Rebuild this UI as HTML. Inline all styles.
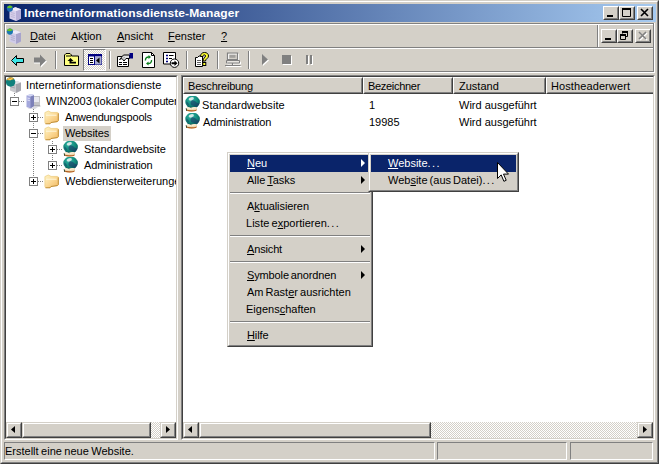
<!DOCTYPE html>
<html lang="de">
<head>
<meta charset="utf-8">
<title>Internetinformationsdienste-Manager</title>
<style>
*{box-sizing:border-box;margin:0;padding:0}
html,body{width:659px;height:464px;overflow:hidden;background:#d4d0c8}
body{font-family:"Liberation Sans",sans-serif;font-size:11px;color:#000;position:relative;line-height:13px}
.abs{position:absolute}
u{text-decoration:underline;text-underline-offset:1px}
#win{position:absolute;left:0;top:0;width:659px;height:464px;background:#d4d0c8;
 border:1px solid;border-color:#d4d0c8 #404040 #404040 #d4d0c8}
#win:before{content:"";position:absolute;left:0;top:0;right:0;bottom:0;border:1px solid;border-color:#fff #808080 #808080 #fff}
#title{left:4px;top:4px;width:652px;height:18px;background:linear-gradient(90deg,#0a246a 0%,#a6caf0 100%)}
#title .txt{position:absolute;left:20px;top:2px;color:#fff;font-weight:bold;font-size:12px;letter-spacing:0.09px;line-height:14px;white-space:nowrap;transform:scaleY(.93);transform-origin:0 100%}
.btn{position:absolute;width:16px;height:14px;background:#d4d0c8;border:1px solid;border-color:#fff #404040 #404040 #fff}
.btn:before{content:"";position:absolute;left:0;top:0;right:0;bottom:0;border:1px solid;border-color:#d4d0c8 #808080 #808080 #d4d0c8}
.btn svg{position:absolute;left:0;top:0}
.t{position:absolute;white-space:nowrap}
.hl{position:absolute;height:1px}
.vl{position:absolute;width:1px}

.dv{position:absolute;width:1px;background-image:repeating-linear-gradient(180deg,#808080 0 1px,transparent 1px 2px)}
.dh{position:absolute;height:1px;background-image:repeating-linear-gradient(90deg,#808080 0 1px,transparent 1px 2px)}
.eb{position:absolute;width:9px;height:9px;border:1px solid #808080;background:#fff}
.eb:before{content:"";position:absolute;left:1px;top:3px;width:5px;height:1px;background:#000}
.eb.plus:after{content:"";position:absolute;left:3px;top:1px;width:1px;height:5px;background:#000}
.sbtrack{background-color:#fff;background-image:conic-gradient(#d4d0c8 25%,#fff 0 50%,#d4d0c8 0 75%,#fff 0);background-size:2px 2px}
.sbb{position:absolute;width:16px;height:16px;background:#d4d0c8;border:1px solid;border-color:#d4d0c8 #404040 #404040 #d4d0c8}
.sbb:before{content:"";position:absolute;left:0;top:0;right:0;bottom:0;border:1px solid;border-color:#fff #808080 #808080 #fff}
.sbb svg{position:absolute;left:0;top:0}
.hd{position:absolute;top:0;height:17px;background:#d4d0c8;border:1px solid;border-color:#fff #404040 #404040 #fff}
.hd:before{content:"";position:absolute;left:0;top:0;right:0;bottom:0;border:1px solid;border-color:#d4d0c8 #808080 #808080 #d4d0c8}
.hd span{position:absolute;left:5px;top:2px;white-space:nowrap}
.sp{position:absolute;top:442px;height:18px;border:1px solid;border-color:#808080 #fff #fff #808080}
.menu{position:absolute;background:#d4d0c8;border:1px solid;border-color:#d4d0c8 #404040 #404040 #d4d0c8}
.menu:before{content:"";position:absolute;left:0;top:0;right:0;bottom:0;border:1px solid;border-color:#fff #808080 #808080 #fff}
.mi{position:absolute;left:2px;right:2px;height:17px}
.mi span{position:absolute;left:17px;top:2px;white-space:nowrap;word-spacing:-1px}
.mi.sel{background:#0a246a;color:#fff}
.ms{position:absolute;left:2px;right:2px;height:2px;margin-top:3px;border-top:1px solid #808080;border-bottom:1px solid #fff}
.arr{position:absolute;right:5px;top:4px;width:0;height:0;border:solid transparent;border-width:4px 0 4px 4.500px;border-left-color:#000}
.arr.w{border-left-color:#fff}
.tsep{position:absolute;top:51px;width:2px;height:18px;border-left:1px solid #808080;border-right:1px solid #fff}
.mi b{font-weight:normal;letter-spacing:1.4px}
</style>
</head>
<body>
<div id="win"></div>

<!-- title bar -->
<div id="title" class="abs"><span class="txt">Internetinformationsdienste-Manager</span></div>
<div class="btn" style="left:603px;top:6px"><svg width="14" height="12"><rect x="3" y="8" width="6" height="2" fill="#000"/></svg></div>
<div class="btn" style="left:619px;top:6px"><svg width="14" height="12"><path d="M2.5 1.5h8v8h-8z" fill="none" stroke="#000" stroke-width="1"/><rect x="2" y="1" width="9" height="2" fill="#000"/></svg></div>
<div class="btn" style="left:637px;top:6px"><svg width="14" height="12"><path d="M3 2l7 7M10 2l-7 7" stroke="#000" stroke-width="1.6" fill="none"/></svg></div>

<svg class="abs" style="left:6px;top:5px" width="16" height="16" viewBox="0 0 16 16"><path d="M3.500 4.200l6-2 5.500 2v9.300l-5 2.500-6.500-2.500z" fill="#d8d0ec"/><path d="M10 16l5-2.500V4.200L10 6z" fill="#b8b0d8"/><path d="M3.500 4.200L10 6l5-1.800-5.500-2z" fill="#f0ecfa"/><path d="M4.800 7.500l4 1M4.800 9.500l4 1M4.800 11.500l4 1" stroke="#b8b0d0" stroke-width=".8"/><circle cx="3.900" cy="3.600" r="3.100" fill="#1c6ab0"/><path d="M1 2.600a3.100 3.100 0 0 1 5.600 -.6c-1.500 1.300-3.800 1.600-5.600 .6z" fill="#66c41e"/></svg><svg class="abs" style="left:6px;top:28px" width="16" height="16" viewBox="0 0 16 16"><path d="M3.500 4.200l6-2 5.500 2v9.300l-5 2.500-6.500-2.500z" fill="#d0cce8"/><path d="M10 16l5-2.500V4.200L10 6z" fill="#a8a4cc"/><path d="M3.500 4.200L10 6l5-1.800-5.500-2z" fill="#eceaf8"/><path d="M4.800 7.500l4 1M4.800 9.500l4 1M4.800 11.500l4 1" stroke="#a8a4c8" stroke-width=".8"/><circle cx="3.900" cy="3.600" r="3.100" fill="#1c78b0"/><path d="M1 2.600a3.100 3.100 0 0 1 5.600 -.6c-1.500 1.300-3.800 1.600-5.600 .6z" fill="#66c41e"/></svg>
<!-- menu bar -->
<div class="hl" style="left:4px;top:23px;width:650px;background:#808080"></div>
<div class="hl" style="left:5px;top:24px;width:648px;background:#fff"></div>
<div class="hl" style="left:6px;top:47px;width:647px;background:#808080"></div>
<div class="hl" style="left:5px;top:48px;width:648px;background:#fff"></div>
<div class="vl" style="left:4px;top:23px;height:49px;background:#808080"></div>
<div class="vl" style="left:5px;top:24px;height:48px;background:#fff"></div>
<div class="vl" style="left:653px;top:24px;height:48px;background:#808080"></div>
<div class="vl" style="left:654px;top:23px;height:50px;background:#fff"></div>
<div class="vl" style="left:597px;top:25px;height:22px;background:#808080"></div>
<div class="vl" style="left:598px;top:25px;height:22px;background:#fff"></div>
<span class="t" style="left:30px;top:30px"><u>D</u>atei</span>
<span class="t" style="left:71px;top:30px">Ak<u>t</u>ion</span>
<span class="t" style="left:117px;top:30px"><u>A</u>nsicht</span>
<span class="t" style="left:168px;top:30px"><u>F</u>enster</span>
<span class="t" style="left:221px;top:30px"><u>?</u></span>
<div class="btn" style="left:601px;top:29px"><svg width="14" height="12"><rect x="3" y="8" width="6" height="2" fill="#000"/></svg></div>
<div class="btn" style="left:617px;top:29px"><svg width="14" height="12"><path d="M4.5 3.5v-2h5v5h-1.500" fill="none" stroke="#000" stroke-width="1"/><rect x="4" y="1" width="6" height="2" fill="#000"/><path d="M2.500 4.500h5v5h-5z" fill="none" stroke="#000" stroke-width="1"/><rect x="2" y="4" width="6" height="2" fill="#000"/></svg></div>
<div class="btn" style="left:635px;top:29px"><svg width="14" height="12"><path d="M4 3l7 7M11 3l-7 7" stroke="#fff" stroke-width="1.6" fill="none"/><path d="M3 2l7 7M10 2l-7 7" stroke="#808080" stroke-width="1.6" fill="none"/></svg></div>

<!-- toolbar -->
<div class="hl" style="left:6px;top:71px;width:648px;background:#808080"></div>
<div class="hl" style="left:4px;top:72px;width:651px;background:#fff"></div>
<div class="tsep" style="left:55px"></div><div class="tsep" style="left:109px"></div><div class="tsep" style="left:186px"></div><div class="tsep" style="left:217px"></div><div class="tsep" style="left:248px"></div>
<div class="abs sbtrack" style="left:83px;top:49px;width:23px;height:22px;border:1px solid;border-color:#808080 #fff #fff #808080"></div>
<svg class="abs" style="left:6px;top:49px" width="320" height="22" viewBox="6 49 320 22">
 <!-- back -->
 <path d="M11.500 60.500l5-5v3h7v4h-7v3z" fill="#3fe6e6" stroke="#000" stroke-width="1" stroke-linejoin="miter"/>
 <!-- forward (disabled) -->
 <path d="M47 61.500l-6-6v3h-7v5h7v4z" fill="#fff"/>
 <path d="M46 60.500l-6-6v3h-6v5h6v4z" fill="#808080"/>
 <!-- up folder -->
 <path d="M64.500 65.500v-10.500l1.500-1.500h4l1.500 1.500v1h7v9.500z" fill="#ffff80" stroke="#000" stroke-width="1"/>
 <path d="M66 56h5" stroke="#000" stroke-width="1"/>
 <path d="M70.500 58l-3 3h2v2.500h6.500v-1.800h-4.500v-.7h2z" fill="#000"/>
 <!-- tree toggle -->
 <rect x="88.500" y="54.500" width="13" height="10" fill="#fff" stroke="#000080" stroke-width="1"/>
 <rect x="88" y="54" width="14" height="2.500" fill="#000080"/>
 <rect x="94.500" y="56.500" width="7" height="8" fill="#a8acd0"/>
 <path d="M94.500 56v9" stroke="#000080" stroke-width="1"/>
 <path d="M90 58.500h3M90 60.500h3M90 62.500h3" stroke="#000" stroke-width="1"/>
 <path d="M99.500 57.500v6l-3.500-3z" fill="#000"/>
 <!-- properties -->
 <path d="M117.500 56.500h11v10h-11z" fill="#fff" stroke="#000" stroke-width="1"/>
 <path d="M119 62.500h3M123 62.500h4M119 64.500h3M123 64.500h4" stroke="#000" stroke-width="1"/>
 <path d="M119.500 59.500l4-4.500h6v3.500h-3.500l-2 2.500-2-2.500z" fill="#e0e0e0" stroke="#000" stroke-width="1"/>
 <path d="M121 58.500l2.500-3M122.500 59.500l2.500-3" stroke="#606060" stroke-width=".8" stroke-dasharray="1 1"/>
 <rect x="129.500" y="53" width="3.500" height="5.500" fill="#000080"/>
 <!-- refresh -->
 <path d="M142.500 52.500h9l3 3v12h-12z" fill="#fff" stroke="#000" stroke-width="1"/>
 <path d="M151.500 52.500v3h3" fill="none" stroke="#000" stroke-width="1"/>
 <path d="M145.500 60.500a3 3 0 0 1 3.500-3.500" fill="none" stroke="#108020" stroke-width="1.400"/>
 <path d="M148.500 55l2.500 2-2.500 2z" fill="#108020"/>
 <path d="M151.500 60a3 3 0 0 1-3.500 3.500" fill="none" stroke="#108020" stroke-width="1.400"/>
 <path d="M148.500 65.500l-2.500-2 2.500-2z" fill="#108020"/>
 <!-- export list -->
 <path d="M163.500 52.500h12v11.500h-12z" fill="#fff" stroke="#000" stroke-width="1"/>
 <path d="M166 55.500h2M166 58.500h2M166 61.500h2" stroke="#000080" stroke-width="1.600"/>
 <path d="M169 55.500h4.500M169 58.500h3" stroke="#000" stroke-width="1"/>
 <circle cx="174.500" cy="63.200" r="4.200" fill="#fff" stroke="#000" stroke-width="1"/>
 <path d="M171.500 62.200h3v-1.700l3 2.700-3 2.700v-1.700h-3z" fill="#000"/>
 <!-- help -->
 <path d="M195.500 57.500h2l1.500-1.500h3.500v10.500h-7z" fill="#fff" stroke="#000" stroke-width="1"/>
 <path d="M197 60.500h4M197 62.500h4M197 64.500h4" stroke="#606060" stroke-width="1"/>
 <path d="M200.500 56.500c0-2.500 1.500-4 4-4s4 1.500 4 3.500c0 2.500-3 2.700-3 5h-2.500c0-3 2.500-3.500 2.500-5 0-.8-.4-1.200-1.200-1.200s-1.300.6-1.300 1.700z" fill="#ffff30" stroke="#000" stroke-width="1"/>
 <rect x="202.800" y="62.500" width="3" height="3" fill="#ffff30" stroke="#000" stroke-width="1"/>
 <!-- computer (disabled) -->
 <g transform="translate(1 1)"><path d="M227.500 53h10v6.500h-10zM226.500 61h13v2h-13zM225 65.500h15.500M232.500 63v2.500" fill="none" stroke="#fff" stroke-width="1"/></g>
 <path d="M227.500 53h10v6.500h-10z" fill="none" stroke="#808080" stroke-width="1.200"/>
 <rect x="229.500" y="54.800" width="6" height="3" fill="#808080" opacity=".6"/>
 <path d="M226.500 60.500h13v2.500h-13z" fill="none" stroke="#808080" stroke-width="1"/>
 <path d="M225 65.500h15.500M232.500 63v2.500" stroke="#808080" stroke-width="1.200"/>
 <!-- play stop pause disabled -->
 <path d="M263 55l6 5.500-6 5.500z" fill="#fff"/><path d="M262 54l6 5.500-6 5.500z" fill="#808080"/>
 <rect x="283" y="56" width="9" height="9" fill="#fff"/><rect x="282" y="55" width="9" height="9" fill="#808080"/>
 <rect x="307" y="56" width="2" height="9" fill="#fff"/><rect x="311" y="56" width="2" height="9" fill="#fff"/>
 <rect x="306" y="55" width="2" height="9" fill="#808080"/><rect x="310" y="55" width="2" height="9" fill="#808080"/>
</svg>

<!-- tree pane -->
<div class="abs" id="tree" style="left:4px;top:75px;width:174px;height:365px;background:#fff;border:1px solid;border-color:#808080 #fff #fff #808080"></div>
<div class="abs" style="left:5px;top:76px;width:172px;height:363px;border:1px solid;border-color:#404040 #d4d0c8 #d4d0c8 #404040"></div>
<div class="abs" id="treeclip" style="left:6px;top:77px;width:170px;height:345px;overflow:hidden">
 <!-- dotted lines -->
 <div class="dv" style="left:8px;top:16px;height:8px"></div>
 <div class="dh" style="left:13px;top:24px;width:6px"></div>
 <div class="dv" style="left:27px;top:32px;height:72px"></div>
 <div class="dh" style="left:32px;top:40px;width:6px"></div>
 <div class="dh" style="left:32px;top:56px;width:6px"></div>
 <div class="dh" style="left:32px;top:104px;width:6px"></div>
 <div class="dv" style="left:46px;top:64px;height:24px"></div>
 <div class="dh" style="left:51px;top:72px;width:6px"></div>
 <div class="dh" style="left:51px;top:88px;width:6px"></div>
 <!-- expand boxes -->
 <div class="eb minus" style="left:4px;top:20px"></div>
 <div class="eb plus" style="left:23px;top:36px"></div>
 <div class="eb minus" style="left:23px;top:52px"></div>
 <div class="eb plus" style="left:42px;top:68px"></div>
 <div class="eb plus" style="left:42px;top:84px"></div>
 <div class="eb plus" style="left:23px;top:100px"></div>
<svg class="abs" style="left:0px;top:0px" width="16" height="16" viewBox="0 0 16 16"><path d="M4 5.500l6.500-1.500 4.500 1.500v8l-5 2.500-6-2.500z" fill="#c8c8cc"/><path d="M10 16l5-2.500v-8L10 7z" fill="#a4a4ac"/><path d="M4 5.500L10 7l5-1.500-4.500-1.500z" fill="#e4e4e8"/><path d="M5 8l4 1M5 10l4 1" stroke="#9c9ca4" stroke-width=".8"/><circle cx="4.600" cy="5" r="4.700" fill="#10807c"/><path d="M.6 2.800a4.700 4.700 0 0 1 7.600 -1c-2 1.500-5.200 2-7.600 1z" fill="#e0a030"/><path d="M2 1.500l2 1.500 2.500-2" stroke="#f8e070" stroke-width=".9" fill="none"/></svg><svg class="abs" style="left:19px;top:16px" width="16" height="16" viewBox="0 0 16 16"><path d="M8 3h7v9H8z" fill="#c4c4c8"/><path d="M9 4h5v5H9z" fill="#e8e8f0"/><path d="M8 12h7l.5 1.500H7.500z" fill="#a8a8b0"/><path d="M1.500 2.500L6 1l3 1v11l-3.500 2.500-4-1.500z" fill="#a4a8dc"/><path d="M5.500 15.500L9 13V2L5.500 3.500z" fill="#7c80b8"/><path d="M1.500 2.500l4 1L9 2 6 1z" fill="#d4d8f4"/><path d="M2.300 5l2.500.6M2.300 7l2.500.6" stroke="#f0f0ff" stroke-width=".8"/><path d="M1.500 14l4 1.500 3.500-2 4 .5-3 2H4z" fill="#d8d8e0" opacity=".9"/></svg><svg class="abs" style="left:38px;top:32px" width="16" height="16" viewBox="0 0 16 16"><defs><linearGradient id="f1" x1="0" y1="0" x2="1" y2="1"><stop offset="0" stop-color="#fff6c8"/><stop offset="0.5" stop-color="#fbd894"/><stop offset="1" stop-color="#f2b860"/></linearGradient></defs><path d="M.8 3.400L4.300 1.800 7 3.200h6.800l.9.900v7.600l-1.200 1.200-6.300.9-1 1.300H1.300L.8 14.300z" fill="url(#f1)"/><path d="M14.300 4.300v7.300l-1 1-6.300.9-1 1.300H1.500" fill="none" stroke="#b8862c" stroke-width=".9"/><path d="M.9 13.800V3.600L4.300 2 7 3.400h6.500" fill="none" stroke="#e8c878" stroke-width=".6"/><path d="M2 6.200h10.500" stroke="#fffbe6" stroke-width="1" opacity=".9"/></svg><svg class="abs" style="left:38px;top:48px" width="16" height="16" viewBox="0 0 16 16"><defs><linearGradient id="f2" x1="0" y1="0" x2="1" y2="1"><stop offset="0" stop-color="#fff6c8"/><stop offset="0.5" stop-color="#fbd894"/><stop offset="1" stop-color="#f2b860"/></linearGradient></defs><path d="M.8 3.400L4.300 1.800 7 3.200h6.800l.9.900v7.600l-1.200 1.200-6.300.9-1 1.300H1.300L.8 14.300z" fill="url(#f2)"/><path d="M14.300 4.300v7.300l-1 1-6.300.9-1 1.300H1.500" fill="none" stroke="#b8862c" stroke-width=".9"/><path d="M.9 13.800V3.600L4.300 2 7 3.400h6.500" fill="none" stroke="#e8c878" stroke-width=".6"/><path d="M2 6.200h10.500" stroke="#fffbe6" stroke-width="1" opacity=".9"/></svg><svg class="abs" style="left:38px;top:96px" width="16" height="16" viewBox="0 0 16 16"><defs><linearGradient id="f3" x1="0" y1="0" x2="1" y2="1"><stop offset="0" stop-color="#fff6c8"/><stop offset="0.5" stop-color="#fbd894"/><stop offset="1" stop-color="#f2b860"/></linearGradient></defs><path d="M.8 3.400L4.300 1.800 7 3.200h6.800l.9.900v7.600l-1.200 1.200-6.300.9-1 1.300H1.300L.8 14.300z" fill="url(#f3)"/><path d="M14.300 4.300v7.300l-1 1-6.300.9-1 1.300H1.500" fill="none" stroke="#b8862c" stroke-width=".9"/><path d="M.9 13.800V3.600L4.300 2 7 3.400h6.500" fill="none" stroke="#e8c878" stroke-width=".6"/><path d="M2 6.200h10.500" stroke="#fffbe6" stroke-width="1" opacity=".9"/></svg><svg class="abs" style="left:57px;top:64px" width="16" height="16" viewBox="0 0 16 16"><defs><radialGradient id="g1" cx="0.4" cy="0.3" r="0.75"><stop offset="0" stop-color="#7cccc0"/><stop offset="0.25" stop-color="#22a494"/><stop offset="0.65" stop-color="#0f8274"/><stop offset="1" stop-color="#0a4c58"/></radialGradient></defs><ellipse cx="7.600" cy="6" rx="7.300" ry="6.400" fill="url(#g1)"/><path d="M6.500 4.500c2-.5 3.500.5 4.500 1.500s2 1.500 3.300 1.200c-.2 2-1.500 3.300-3 3.300S9 9.500 7.500 9.500 4.500 7 6.500 4.500z" fill="#1c3868" opacity=".6"/><path d="M1.200 5.500c1.500.5 2.800 2 2.800 4l-2.200-1.200z" fill="#1c3868" opacity=".5"/><ellipse cx="6.300" cy="2.700" rx="2.700" ry="1.500" fill="#f0f4f4" opacity=".8" transform="rotate(-15 6.300 2.700)"/><path d="M1.200 12.200c1.200-1.100 3-1.300 4.600-.4 1.300-.8 3.600-1 5.400-.5l1 1.500-1 2.300c-3 .9-7.200.9-9.500 0z" fill="#f0dcb4"/><path d="M1.500 14.500c2.800 1.300 7 1.300 9.700.3l.8-1.400c-3.200 1.200-7.800 1.300-10.800.2z" fill="#b05a1c"/><path d="M1.200 12.300l.5 2.600" stroke="#203820" stroke-width=".9"/><path d="M2.300 12.600c1.200-.6 2.500-.5 3.500.2M7 12.500c1.400-.7 2.900-.8 4.100-.5" stroke="#fffaf0" stroke-width=".8" fill="none"/></svg><svg class="abs" style="left:57px;top:80px" width="16" height="16" viewBox="0 0 16 16"><defs><radialGradient id="g2" cx="0.4" cy="0.3" r="0.75"><stop offset="0" stop-color="#7cccc0"/><stop offset="0.25" stop-color="#22a494"/><stop offset="0.65" stop-color="#0f8274"/><stop offset="1" stop-color="#0a4c58"/></radialGradient></defs><ellipse cx="7.600" cy="6" rx="7.300" ry="6.400" fill="url(#g2)"/><path d="M6.500 4.500c2-.5 3.500.5 4.500 1.500s2 1.500 3.300 1.200c-.2 2-1.500 3.300-3 3.300S9 9.500 7.500 9.500 4.500 7 6.500 4.500z" fill="#1c3868" opacity=".6"/><path d="M1.200 5.500c1.500.5 2.800 2 2.800 4l-2.200-1.200z" fill="#1c3868" opacity=".5"/><ellipse cx="6.300" cy="2.700" rx="2.700" ry="1.500" fill="#f0f4f4" opacity=".8" transform="rotate(-15 6.300 2.700)"/><path d="M1.200 12.200c1.200-1.100 3-1.300 4.600-.4 1.300-.8 3.600-1 5.400-.5l1 1.500-1 2.300c-3 .9-7.200.9-9.500 0z" fill="#f0dcb4"/><path d="M1.500 14.500c2.800 1.300 7 1.300 9.700.3l.8-1.400c-3.200 1.200-7.800 1.300-10.800.2z" fill="#b05a1c"/><path d="M1.200 12.300l.5 2.600" stroke="#203820" stroke-width=".9"/><path d="M2.300 12.600c1.200-.6 2.500-.5 3.500.2M7 12.500c1.400-.7 2.900-.8 4.100-.5" stroke="#fffaf0" stroke-width=".8" fill="none"/></svg>
 <!-- labels -->
 <span class="t tl" style="left:20px;top:2px;letter-spacing:0.1px">Internetinformationsdienste</span>
 <span class="t tl" style="left:40px;top:18px;word-spacing:-1.5px">WIN2003 (lokaler <span style="letter-spacing:-0.25px">Computer)</span></span>
 <span class="t tl" style="left:59px;top:34px;letter-spacing:-0.2px">Anwendungspools</span>
 <div class="abs" style="left:57px;top:49px;width:48px;height:15px;background:#d4d0c8"></div>
 <span class="t tl" style="left:59px;top:50px;letter-spacing:-0.12px">Websites</span>
 <span class="t tl" style="left:78px;top:66px">Standardwebsite</span>
 <span class="t tl" style="left:78px;top:82px;letter-spacing:-0.08px">Administration</span>
 <span class="t tl" style="left:59px;top:98px">Webdiensterweiterungen</span>
</div>
<!-- tree scrollbar -->
<div class="abs sbtrack" style="left:6px;top:422px;width:170px;height:16px"></div>
<div class="sbb" style="left:6px;top:422px"><svg width="14" height="14"><path d="M8 3v7l-4-3.5z" fill="#000"/></svg></div>
<div class="sbb" style="left:22px;top:422px;width:129px"></div>
<div class="sbb" style="left:160px;top:422px"><svg width="14" height="14"><path d="M5 3v7l4-3.5z" fill="#000"/></svg></div>

<!-- list pane -->
<div class="abs" id="list" style="left:181px;top:75px;width:474px;height:365px;background:#fff;border:1px solid;border-color:#808080 #fff #fff #808080"></div>
<div class="abs" style="left:182px;top:76px;width:472px;height:363px;border:1px solid;border-color:#404040 #d4d0c8 #d4d0c8 #404040"></div>
<div class="abs" id="listclip" style="left:183px;top:77px;width:470px;height:345px;overflow:hidden">
 <div class="hd" style="left:0;width:180px"><span style="left:4px;letter-spacing:-0.2px">Beschreibung</span></div>
 <div class="hd" style="left:180px;width:90px"><span style="left:4px;letter-spacing:-0.3px">Bezeichner</span></div>
 <div class="hd" style="left:270px;width:93px"><span>Zustand</span></div>
 <div class="hd" style="left:363px;width:140px"><span style="left:4px;letter-spacing:0.1px">Hostheaderwert</span></div>
<svg class="abs" style="left:2px;top:19px" width="16" height="16" viewBox="0 0 16 16"><defs><radialGradient id="g3" cx="0.4" cy="0.3" r="0.75"><stop offset="0" stop-color="#7cccc0"/><stop offset="0.25" stop-color="#22a494"/><stop offset="0.65" stop-color="#0f8274"/><stop offset="1" stop-color="#0a4c58"/></radialGradient></defs><ellipse cx="7.600" cy="6" rx="7.300" ry="6.400" fill="url(#g3)"/><path d="M6.500 4.500c2-.5 3.500.5 4.500 1.500s2 1.500 3.300 1.200c-.2 2-1.500 3.300-3 3.300S9 9.500 7.500 9.500 4.500 7 6.500 4.500z" fill="#1c3868" opacity=".6"/><path d="M1.200 5.500c1.500.5 2.800 2 2.800 4l-2.200-1.200z" fill="#1c3868" opacity=".5"/><ellipse cx="6.300" cy="2.700" rx="2.700" ry="1.500" fill="#f0f4f4" opacity=".8" transform="rotate(-15 6.300 2.700)"/><path d="M1.200 12.200c1.200-1.100 3-1.300 4.600-.4 1.300-.8 3.600-1 5.400-.5l1 1.500-1 2.300c-3 .9-7.200.9-9.500 0z" fill="#f0dcb4"/><path d="M1.500 14.500c2.800 1.300 7 1.300 9.700.3l.8-1.400c-3.200 1.200-7.800 1.300-10.800.2z" fill="#b05a1c"/><path d="M1.200 12.300l.5 2.600" stroke="#203820" stroke-width=".9"/><path d="M2.300 12.600c1.200-.6 2.500-.5 3.500.2M7 12.500c1.400-.7 2.900-.8 4.100-.5" stroke="#fffaf0" stroke-width=".8" fill="none"/></svg><svg class="abs" style="left:2px;top:36px" width="16" height="16" viewBox="0 0 16 16"><defs><radialGradient id="g4" cx="0.4" cy="0.3" r="0.75"><stop offset="0" stop-color="#7cccc0"/><stop offset="0.25" stop-color="#22a494"/><stop offset="0.65" stop-color="#0f8274"/><stop offset="1" stop-color="#0a4c58"/></radialGradient></defs><ellipse cx="7.600" cy="6" rx="7.300" ry="6.400" fill="url(#g4)"/><path d="M6.500 4.500c2-.5 3.500.5 4.500 1.500s2 1.500 3.300 1.200c-.2 2-1.500 3.300-3 3.300S9 9.500 7.500 9.500 4.500 7 6.500 4.500z" fill="#1c3868" opacity=".6"/><path d="M1.200 5.500c1.500.5 2.800 2 2.800 4l-2.200-1.200z" fill="#1c3868" opacity=".5"/><ellipse cx="6.300" cy="2.700" rx="2.700" ry="1.500" fill="#f0f4f4" opacity=".8" transform="rotate(-15 6.300 2.700)"/><path d="M1.200 12.200c1.200-1.100 3-1.300 4.600-.4 1.300-.8 3.600-1 5.400-.5l1 1.500-1 2.300c-3 .9-7.200.9-9.500 0z" fill="#f0dcb4"/><path d="M1.500 14.500c2.800 1.300 7 1.300 9.700.3l.8-1.400c-3.200 1.200-7.800 1.300-10.800.2z" fill="#b05a1c"/><path d="M1.200 12.300l.5 2.600" stroke="#203820" stroke-width=".9"/><path d="M2.300 12.600c1.200-.6 2.500-.5 3.500.2M7 12.500c1.400-.7 2.900-.8 4.100-.5" stroke="#fffaf0" stroke-width=".8" fill="none"/></svg>
 <span class="t" style="left:19px;top:22px;letter-spacing:0.05px">Standardwebsite</span>
 <span class="t" style="left:186px;top:22px">1</span>
 <span class="t" style="left:276px;top:22px">Wird ausgeführt</span>
 <span class="t" style="left:20px;top:39px;letter-spacing:-0.1px">Administration</span>
 <span class="t" style="left:186px;top:39px">19985</span>
 <span class="t" style="left:276px;top:39px">Wird ausgeführt</span>
</div>
<!-- list scrollbar -->
<div class="abs sbtrack" style="left:183px;top:422px;width:470px;height:16px"></div>
<div class="sbb" style="left:183px;top:422px"><svg width="14" height="14"><path d="M8 3v7l-4-3.5z" fill="#000"/></svg></div>
<div class="sbb" style="left:199px;top:422px;width:232px"></div>
<div class="sbb" style="left:637px;top:422px"><svg width="14" height="14"><path d="M5 3v7l4-3.5z" fill="#000"/></svg></div>

<!-- status bar -->
<div class="sp" style="left:4px;width:431px"></div>
<div class="sp" style="left:437px;width:130px"></div>
<div class="sp" style="left:570px;width:83px"></div>
<span class="t" style="left:5px;top:445px;word-spacing:-0.6px">Erstellt eine neue Website.</span>

<!-- context menu -->
<div class="menu" style="left:227px;top:152px;width:146px;height:195px">
 <div class="mi sel" style="top:2px"><span><u>N</u>eu</span><i class="arr w"></i></div>
 <div class="mi" style="top:19px"><span>Alle <u>T</u>asks</span><i class="arr"></i></div>
 <div class="ms" style="top:36px"></div>
 <div class="mi" style="top:45px"><span style="letter-spacing:-0.08px">A<u>k</u>tualisieren</span></div>
 <div class="mi" style="top:62px"><span style="left:16px;letter-spacing:0.03px">Liste e<u>x</u>portieren<b>...</b></span></div>
 <div class="ms" style="top:79px"></div>
 <div class="mi" style="top:88px"><span style="letter-spacing:-0.15px"><u>A</u>nsicht</span><i class="arr"></i></div>
 <div class="ms" style="top:105px"></div>
 <div class="mi" style="top:114px"><span style="letter-spacing:-0.13px"><u>S</u>ymbole anordnen</span><i class="arr"></i></div>
 <div class="mi" style="top:131px"><span>Am Rast<u>e</u>r ausrichten</span></div>
 <div class="mi" style="top:148px"><span style="left:16px">Eigens<u>c</u>haften</span></div>
 <div class="ms" style="top:165px"></div>
 <div class="mi" style="top:174px"><span style="letter-spacing:-0.1px"><u>H</u>ilfe</span></div>
</div>
<div class="menu" style="left:368px;top:152px;width:151px;height:40px">
 <div class="mi sel" style="top:2px"><span><u>W</u>ebsite<b>...</b></span></div>
 <div class="mi" style="top:19px"><span>Web<u>s</u>ite (aus Datei)<b>...</b></span></div>
</div>
<!-- cursor -->
<svg class="abs" style="left:497px;top:162px" width="13" height="22" viewBox="0 0 13 22"><path d="M0.5 0.5v16l3.7-3.6 2.7 6.4 2.3-1-2.7-6.2h5z" fill="#fff" stroke="#000" stroke-width="1"/></svg>
</body>
</html>
